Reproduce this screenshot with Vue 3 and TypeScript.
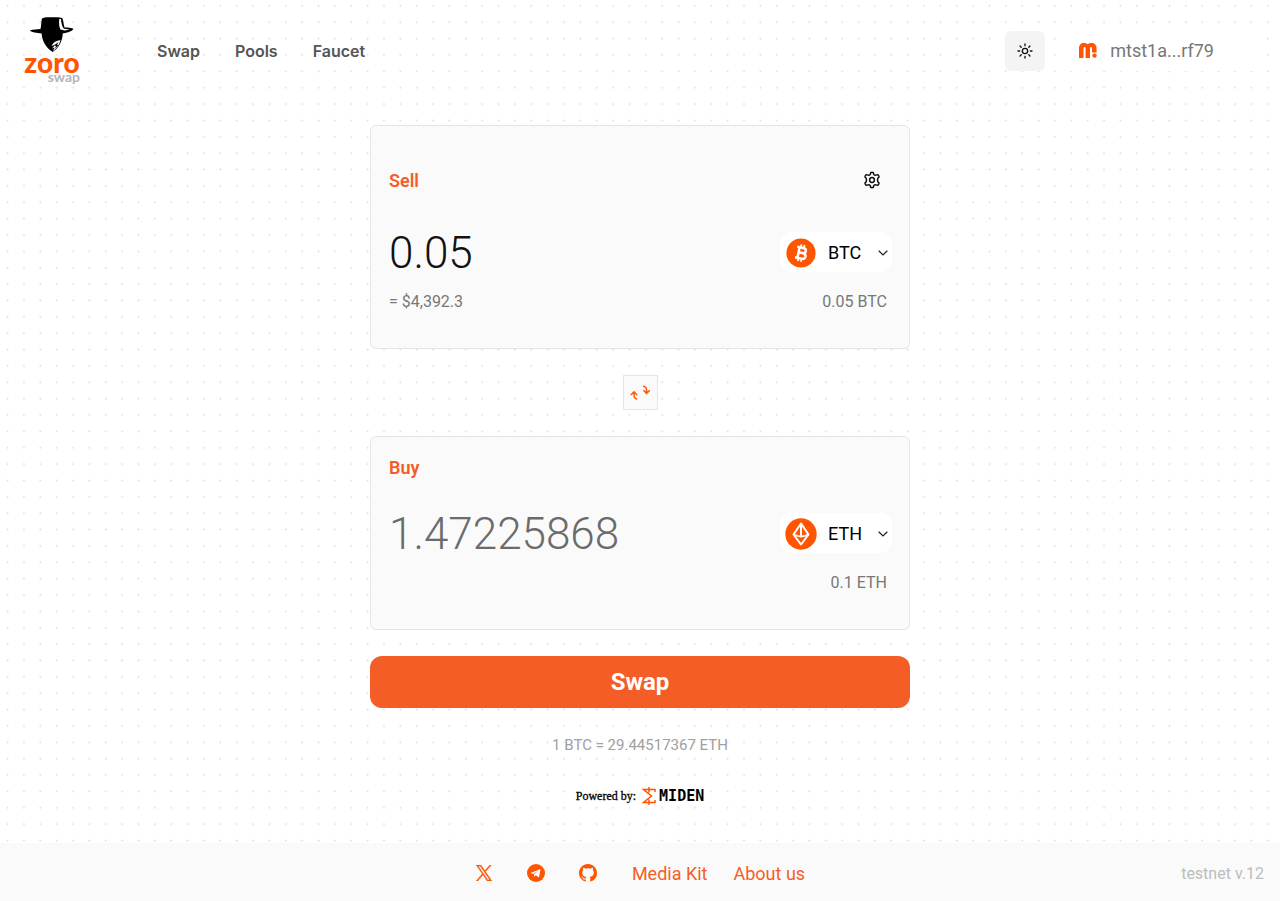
<script setup lang="ts">
import { ref } from 'vue'

const sellAmount = ref('0.05')
const buyAmount = ref('1.47225868')
const sellToken = ref('BTC')
const buyToken = ref('ETH')
const tokens: string[] = ['BTC', 'ETH']
const pages: string[] = ['Swap', 'Pools', 'Faucet']

function flip(): void {
  const amount = sellAmount.value
  const token = sellToken.value
  sellAmount.value = buyAmount.value
  sellToken.value = buyToken.value
  buyAmount.value = amount
  buyToken.value = token
}
</script>

<template>
  <div class="page">
    <svg class="dots" aria-hidden="true">
      <defs>
        <pattern id="dot-grid" x="-0.6" y="-2.3" width="16.365" height="16.365" patternUnits="userSpaceOnUse">
          <circle cx="8.2" cy="8.2" r="0.95" fill="#dcdcdc" />
        </pattern>
      </defs>
      <rect width="100%" height="100%" fill="url(#dot-grid)" />
    </svg>

    <header class="header">
      <a class="logo" href="#" aria-label="Zoro Swap home">
        <svg width="46" height="38" viewBox="0 0 46 38" aria-hidden="true">
          <path d="M11.500 13C12.500 9 12 5 13 2.500C15 1 19 1.300 23 1.200C27 1.300 32 1 33.500 2.500C34.500 5 34.500 8 35.500 11.500C40 11.500 43.500 12 44.500 13C42 16 37 17 33.800 17.300C33.500 25 30 32 23.700 36C17 32 13 25 12.600 17.500C8 17 3 16.500 .8 14.500C4 13 8 13.500 11.500 13Z" fill="#000" />
          <path d="M30.300 3C29.800 7 30 10.500 31.500 13.500L35.500 14.500L41 13.500L35 12.800C32.800 10.500 32.300 7 32 3Z" fill="#fff" />
          <path d="M22.500 30C24 27 26 25 31.500 24C30.500 28.500 28 32 24 35L25.500 31.500L23 32.500L26.500 28.500Z" fill="#fff" />
          <path d="M25.500 29L29.500 26L28 29H29.500L25.500 33L27 30.200Z" fill="#000" />
        </svg>
        <span class="logo-zoro">zoro</span>
        <span class="logo-swap">swap</span>
      </a>
      <nav class="nav">
        <a v-for="page in pages" :key="page" href="#">{{ page }}</a>
      </nav>
      <button class="theme" type="button" aria-label="Toggle theme">
        <svg width="16" height="16" viewBox="0 0 24 24" fill="none" stroke="#111" stroke-width="2" stroke-linecap="round" aria-hidden="true">
          <circle cx="12" cy="12" r="4" />
          <path d="M12 1.500v2.500M12 20v2.500M4.600 4.600l1.700 1.700M17.700 17.700l1.700 1.700M1.500 12H4M20 12h2.500M6.300 17.700l-1.700 1.700M19.400 4.600l-1.700 1.700" />
        </svg>
      </button>
      <button class="wallet" type="button">
        <svg width="18" height="15" viewBox="0 0 18 15" aria-hidden="true">
          <path d="M0 15V5.500C0 2 2 0 5 0C6.500 0 7.800.4 8.800 1.200C9.800.4 11 0 12.600 0C15.800 0 17.600 2 17.600 5.200V9.500H13V5.600C13 4.500 12.700 4 12 4C11.300 4 11 4.500 11 5.600V15H6.600V5.600C6.600 4.500 6.300 4 5.600 4C4.800 4 4.500 4.500 4.500 5.600V15Z" fill="#ff5500" />
          <circle cx="15.500" cy="12.600" r="2.200" fill="#ff5500" />
        </svg>
        <span>mtst1a...rf79</span>
      </button>
    </header>

    <main class="main">
      <section class="card card-sell">
        <div class="card-head">
          <label for="sell">Sell</label>
          <button class="gear" type="button" aria-label="Settings">
            <svg width="18" height="18" viewBox="0 0 24 24" fill="none" stroke="#111" stroke-width="2" stroke-linejoin="round" aria-hidden="true">
              <path d="M9.700 4.600L10.200 2.300Q12 1.300 13.800 2.300L14.300 4.600Q15.700 5.900 17.300 5.500L19.500 4.800Q21.300 5.900 21.400 7.900L19.700 9.600Q19.100 12 19.700 14.400L21.400 16.100Q21.300 18.100 19.500 19.200L17.300 18.500Q15.700 18.100 14.300 19.400L13.800 21.700Q12 22.700 10.200 21.700L9.700 19.400Q8.300 18.100 6.700 18.500L4.500 19.200Q2.700 18.100 2.600 16.100L4.300 14.400Q4.900 12 4.300 9.600L2.600 7.900Q2.700 5.900 4.500 4.800L6.700 5.500Q8.300 5.900 9.700 4.600Z" />
              <circle cx="12" cy="12" r="3.200" />
            </svg>
          </button>
        </div>
        <div class="row">
          <input id="sell" v-model="sellAmount" class="amount" type="text" inputmode="decimal" />
          <div class="token">
            <svg width="32" height="32" viewBox="0 0 32 32" aria-hidden="true">
              <circle cx="16" cy="16" r="14.600" fill="#ff5500" />
              <g transform="rotate(12 16 16)" fill="none" stroke="#fff">
                <path d="M11 10.600H17.200C21.300 10.600 21.300 15.800 17.200 15.800H13.500M13.500 10.600V21.400M17.200 15.800C22.400 15.800 22.400 21.400 17.800 21.400H11" stroke-width="2.500" />
                <path d="M14.600 7.500V10M17.800 7.500V10M14.600 22V24.500M17.800 22V24.500" stroke-width="1.800" />
              </g>
            </svg>
            <select v-model="sellToken" aria-label="Token to sell">
              <option v-for="token in tokens" :key="token">{{ token }}</option>
            </select>
            <svg class="chevron" width="10" height="6" viewBox="0 0 10 6" aria-hidden="true"><path d="M.7.700L5 4.900L9.300.700" /></svg>
          </div>
        </div>
        <div class="row sub">
          <span>= $4,392.3</span>
          <span>0.05 BTC</span>
        </div>
      </section>

      <button class="flip" type="button" aria-label="Switch tokens" @click="flip">
        <svg width="21" height="16" viewBox="0 0 21 16" fill="none" stroke="#ff5500" stroke-width="1.500" aria-hidden="true">
          <path d="M.8 10L4 6.800L7.200 10M4 7V10C4 12.500 5 13.800 7.200 14.200" />
          <path d="M13 1.300C15.500 1.600 16.600 3 16.600 5.500V8M13.400 5.200L16.600 8.400L19.800 5.200" />
        </svg>
      </button>

      <section class="card card-buy">
        <div class="card-head">
          <label for="buy">Buy</label>
        </div>
        <div class="row">
          <input id="buy" v-model="buyAmount" class="amount" type="text" readonly />
          <div class="token">
            <svg width="32" height="32" viewBox="0 0 32 32" aria-hidden="true">
              <circle cx="16" cy="16" r="15.700" fill="#ff5500" />
              <path d="M16 5.500L23.500 16.500L16 26.500L8.500 16.500ZM9 16.500Q16 20.500 23 16.500M16 6V18" fill="none" stroke="#fff" stroke-width="2" stroke-linejoin="round" />
            </svg>
            <select v-model="buyToken" aria-label="Token to buy">
              <option v-for="token in tokens" :key="token">{{ token }}</option>
            </select>
            <svg class="chevron" width="10" height="6" viewBox="0 0 10 6" aria-hidden="true"><path d="M.7.700L5 4.900L9.300.700" /></svg>
          </div>
        </div>
        <div class="row sub">
          <span></span>
          <span>0.1 ETH</span>
        </div>
      </section>

      <button class="submit" type="button">Swap</button>
      <p class="rate">1 BTC = 29.44517367 ETH</p>
      <p class="powered">
        <span>Powered by:</span>
        <svg width="14" height="18" viewBox="0 0 14 18" fill="none" stroke="#ff5500" stroke-width="1.500" aria-hidden="true">
          <path d="M13 5V2.500H1.500L9.500 9L1.500 15.500H13V13M7 0V5.500M7 12.500V18" />
        </svg>
        <b>MIDEN</b>
      </p>
    </main>

    <footer class="footer">
      <a href="#" aria-label="X">
        <svg width="16" height="16" viewBox="0 0 24 24" aria-hidden="true">
          <path d="M14.200 10.200L22.900 0H20.800L13.300 8.800L7.300 0H.4L9.500 13.300L.4 24H2.500L10.500 14.700L16.800 24H23.700ZM11.400 13.500L3.200 1.600H6.400L20.800 22.500H17.600Z" fill="#ff5500" stroke="#ff5500" stroke-width="0.8" />
        </svg>
      </a>
      <a href="#" aria-label="Telegram">
        <svg width="18" height="18" viewBox="0 0 18 18" aria-hidden="true">
          <circle cx="9" cy="9" r="9" fill="#ff5500" />
          <path d="M3.500 9L13.500 5L12 13.500L8.800 11.200L7.200 12.800L7 10.300L11.300 6.700L6 9.900Z" fill="#fff" />
        </svg>
      </a>
      <a href="#" aria-label="GitHub">
        <svg width="18" height="18" viewBox="0 0 16 16" aria-hidden="true">
          <path d="M8 0C3.580 0 0 3.580 0 8c0 3.540 2.290 6.530 5.470 7.590.4.070.55-.17.55-.38 0-.19-.01-.82-.01-1.490-2.010.37-2.530-.49-2.690-.94-.09-.23-.48-.94-.82-1.130-.28-.15-.68-.52-.01-.53.63-.01 1.080.58 1.230.82.72 1.210 1.870.87 2.330.66.07-.52.28-.87.51-1.070-1.780-.2-3.640-.89-3.640-3.950 0-.87.31-1.590.82-2.150-.08-.2-.36-1.020.08-2.120 0 0 .67-.21 2.200.82.64-.18 1.320-.27 2-.27s1.360.09 2 .27c1.530-1.040 2.200-.82 2.200-.82.44 1.100.16 1.920.08 2.120.51.56.82 1.270.82 2.150 0 3.070-1.870 3.750-3.650 3.950.29.25.54.73.54 1.480 0 1.070-.01 1.930-.01 2.200 0 .21.15.46.55.38A8.010 8.010 0 0 0 16 8c0-4.420-3.580-8-8-8Z" fill="#ff5500" />
        </svg>
      </a>
      <div class="links">
        <a href="#">Media Kit</a>
        <a href="#">About us</a>
      </div>
      <span class="version">testnet v.12</span>
    </footer>
  </div>
</template>

<style>
body {
  margin: 0;
  background: #fff;
}
</style>

<style scoped>
.page {
  position: relative;
  display: flex;
  flex-direction: column;
  min-height: 100vh;
  font-family: Roboto, "Liberation Sans", sans-serif;
  font-size: 16px;
  color: #111;
}
.page * {
  box-sizing: border-box;
}
.dots {
  position: absolute;
  inset: 0;
  z-index: -1;
  width: 100%;
  height: 100%;
}
svg {
  display: block;
  flex: none;
}
button,
input,
select {
  margin: 0;
  padding: 0;
  border: 0;
  background: none;
  color: inherit;
  font: inherit;
}
button {
  display: flex;
  align-items: center;
  justify-content: center;
  cursor: pointer;
}
a {
  color: inherit;
  text-decoration: none;
}
.header {
  display: flex;
  align-items: center;
  height: 101px;
  padding: 0 20px 0 24px;
}
.logo {
  display: flex;
  flex-direction: column;
  align-items: center;
  width: 56px;
  padding-bottom: 2px;
  font-family: Lato, sans-serif;
}
.logo-zoro {
  color: #ff5500;
  font-size: 28px;
  font-weight: 900;
  line-height: 16px;
}
.logo-swap {
  align-self: flex-end;
  color: #b4b4be;
  font-size: 14px;
  font-weight: 700;
  line-height: 14px;
}
.nav {
  display: flex;
  flex: 1;
  gap: 35px;
  margin-left: 77px;
  color: #555;
  font-family: Inter, sans-serif;
  font-size: 16px;
  font-weight: 600;
}
.theme {
  width: 40px;
  height: 40px;
  border-radius: 6px;
  background: #f4f4f4;
}
.wallet {
  gap: 13px;
  height: 40px;
  margin-left: 16px;
  padding: 0 46px 0 18px;
  background: #fff;
  color: #777;
  font-size: 18px;
}
.main {
  display: flex;
  flex: 1;
  flex-direction: column;
  align-items: center;
  width: 100%;
  max-width: 540px;
  margin: 0 auto;
  padding: 24px 0 32px;
}
.card {
  width: 100%;
  padding: 0 17px 37px 18px;
  border: 1px solid #e5e5e5;
  border-radius: 6px;
  background: #fafafa;
}
.card-sell {
  padding-top: 34px;
}
.card-buy {
  padding-top: 10px;
}
.card-head {
  display: flex;
  align-items: center;
  justify-content: space-between;
  height: 40px;
  margin-bottom: 32px;
  color: #f55d26;
  font-size: 18px;
  font-weight: 600;
}
.card-buy .card-head {
  margin-bottom: 26px;
}
.gear {
  width: 40px;
  height: 40px;
}
.row {
  display: flex;
  align-items: center;
  justify-content: space-between;
  height: 40px;
}
.amount {
  flex: 1;
  min-width: 0;
  height: 54px;
  padding-top: 2px;
  font-size: 44px;
  font-weight: 300;
}
.card-buy .amount {
  color: #6b6b6b;
}
.token {
  display: flex;
  align-items: center;
  width: 112px;
  height: 40px;
  padding: 2px 4px 0 5px;
  border-radius: 12px;
  background: #fff;
}
.token select {
  flex: 1;
  min-width: 0;
  height: 36px;
  margin-left: 11px;
  padding-bottom: 2px;
  appearance: none;
  color: #000;
  font-size: 18px;
}
.chevron {
  fill: none;
  stroke: #222;
  stroke-width: 1.3;
}
.sub {
  height: 20px;
  margin-top: 19px;
  padding-right: 5px;
  color: #777;
}
.flip {
  width: 35px;
  height: 35px;
  margin: 26px 0;
  border: 1px solid #e5e5e5;
  background: #fafafa;
}
.submit {
  width: 100%;
  height: 52px;
  margin-top: 26px;
  border-radius: 12px;
  background: #f55d26;
  color: #fff;
  font-size: 24px;
  font-weight: 700;
}
.rate {
  margin: 27px 0 0;
  color: #a0a0a0;
  font-size: 15px;
  line-height: 20px;
}
.powered {
  display: flex;
  align-items: center;
  height: 20px;
  margin: 31px 0 0;
  color: #000;
  font-family: "Liberation Serif", serif;
  font-size: 12px;
}
.powered span {
  -webkit-text-stroke: 0.3px #000;
}
.powered svg {
  margin: 0 3px 0 6px;
}
.powered b {
  font-family: "DejaVu Sans Mono", monospace;
  font-size: 15px;
}
.footer {
  position: relative;
  display: flex;
  align-items: center;
  justify-content: center;
  gap: 26px;
  height: 58px;
  padding: 2px 4px 0 0;
  background: #fafafa;
  color: #f55d26;
  font-size: 18px;
}
.footer a[aria-label] {
  display: flex;
  justify-content: center;
  width: 26px;
}
.links {
  display: flex;
  gap: 26px;
  margin-left: 5px;
}
.version {
  position: absolute;
  right: 16px;
  color: #bdbdbd;
  font-size: 16px;
}
</style>
